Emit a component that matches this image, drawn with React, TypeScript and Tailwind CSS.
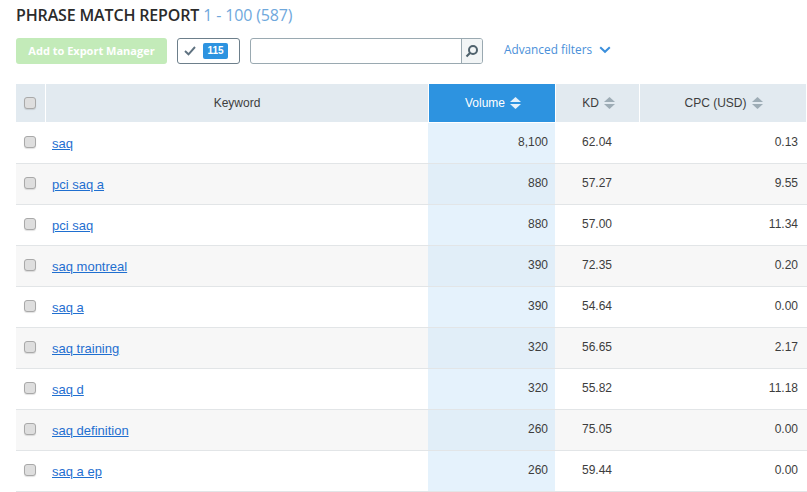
const rows = [
  { keyword: 'saq', volume: '8,100', kd: '62.04', cpc: '0.13' },
  { keyword: 'pci saq a', volume: '880', kd: '57.27', cpc: '9.55' },
  { keyword: 'pci saq', volume: '880', kd: '57.00', cpc: '11.34' },
  { keyword: 'saq montreal', volume: '390', kd: '72.35', cpc: '0.20' },
  { keyword: 'saq a', volume: '390', kd: '54.64', cpc: '0.00' },
  { keyword: 'saq training', volume: '320', kd: '56.65', cpc: '2.17' },
  { keyword: 'saq d', volume: '320', kd: '55.82', cpc: '11.18' },
  { keyword: 'saq definition', volume: '260', kd: '75.05', cpc: '0.00' },
  { keyword: 'saq a ep', volume: '260', kd: '59.44', cpc: '0.00' },
]

const SortIcon = ({ color }: { color: string }) => (
  <svg width="11" height="12" viewBox="0 0 11 12" className="ml-[5px]">
    <path d="M5.5 0L11 5H0z" fill={color} />
    <path d="M0 7H11L5.5 12z" fill={color} />
  </svg>
)

const Checkbox = () => (
  <span className="block w-[12px] h-[12px] rounded-[3px] border border-[#a9a9a9] bg-[#dedede] shadow-[0_1px_1px_rgba(0,0,0,0.12)]" />
)

export default function App() {
  return (
    <div className="w-[807px] h-[492px] overflow-hidden bg-white pl-4 font-['Liberation_Sans',sans-serif] text-[12px] text-[#3d3d3d]">
      <div className="h-[38px] pt-[5px] font-['Open_Sans',sans-serif] text-[16px] leading-[20px] tracking-[-0.15px]">
        <span className="font-semibold text-[#2b2b2b]">PHRASE MATCH REPORT</span>{' '}
        <span className="text-[#6fa8dc]">1 - 100 (587)</span>
      </div>

      <div className="flex h-[26px] items-stretch">
        <button className="w-[151px] rounded-[3px] bg-[#c3ebb9] font-['Open_Sans',sans-serif] text-[11px] font-bold text-white">
          Add to Export Manager
        </button>
        <div className="ml-[10px] flex w-[63px] items-center rounded-[3px] border border-[#6d7f8b] pl-[6px]">
          <svg width="12" height="10" viewBox="0 0 12 10" fill="none">
            <path d="M1 5L4.5 8.3L11 1" stroke="#5f7280" strokeWidth="1.9" />
          </svg>
          <span className="ml-[7px] w-[25px] h-[16px] rounded-[2px] bg-[#2d93e0] text-center text-[10px] font-bold leading-[16px] text-white">
            115
          </span>
        </div>
        <div className="ml-[10px] flex w-[233px] rounded-[3px] border border-[#9aa9b1]">
          <div className="flex-1" />
          <div className="flex w-[21px] items-center justify-center rounded-r-[2px] border-l border-[#9aa9b1] bg-[#f2f5f6]">
            <svg width="14" height="14" viewBox="0 0 14 14" fill="none">
              <circle cx="8" cy="6" r="4" stroke="#4f626d" strokeWidth="2" />
              <path d="M5 9L1.5 12.5" stroke="#4f626d" strokeWidth="2.2" />
            </svg>
          </div>
        </div>
        <div className="ml-[21px] flex items-center pb-[2px] font-['Open_Sans',sans-serif] text-[11.8px] text-[#4a90d9]">
          Advanced filters
          <svg width="12" height="8" viewBox="0 0 12 8" fill="none" className="ml-[7px]">
            <path d="M1.2 1.2L6 5.8L10.8 1.2" stroke="#3b8fdc" strokeWidth="2" />
          </svg>
        </div>
      </div>

      <div className="mt-[20px] flex h-[38px] w-[790px]">
        <div className="flex w-[29px] items-center bg-[#e2eaf0] pl-[8px]">
          <Checkbox />
        </div>
        <div className="ml-[1px] flex w-[382px] items-center justify-center bg-[#e2eaf0]">Keyword</div>
        <div className="ml-[1px] flex w-[126px] items-center justify-center bg-[#2d93e0] pl-[2px] text-white">
          Volume
          <SortIcon color="#e4f1fb" />
        </div>
        <div className="ml-[1px] flex w-[83px] items-center justify-center bg-[#e2eaf0] pl-[2px]">
          KD
          <SortIcon color="#9dacb5" />
        </div>
        <div className="ml-[1px] flex w-[166px] items-center justify-center bg-[#e2eaf0] pl-[1px]">
          CPC (USD)
          <SortIcon color="#9dacb5" />
        </div>
      </div>

      <div className="w-[791px]">
        {rows.map((row, i) => (
          <div
            key={i}
            className={`flex border-b border-[#e2e5e7] ${i === 0 ? 'h-[42px] pt-px' : 'h-[41px]'} ${
              i % 2 === 1 ? 'bg-[#f7f7f7]' : 'bg-white'
            }`}
          >
            <div className="flex w-[30px] items-center pb-[3px] pl-[8px]">
              <Checkbox />
            </div>
            <div className="w-[382px] pl-[6px] pt-[12px]">
              <a href="#" className="text-[13px] leading-[15px] text-[#1f6fd0] underline">
                {row.keyword}
              </a>
            </div>
            <div
              className={`w-[127px] pr-[7px] pt-[12px] text-right leading-[14px] ${
                i % 2 === 1 ? 'bg-[#e1eef8]' : 'bg-[#e5f2fc]'
              }`}
            >
              {row.volume}
            </div>
            <div className="w-[84px] pl-[27px] pt-[12px] leading-[14px]">{row.kd}</div>
            <div className="w-[168px] pr-[9px] pt-[12px] text-right leading-[14px]">{row.cpc}</div>
          </div>
        ))}
      </div>
    </div>
  )
}
